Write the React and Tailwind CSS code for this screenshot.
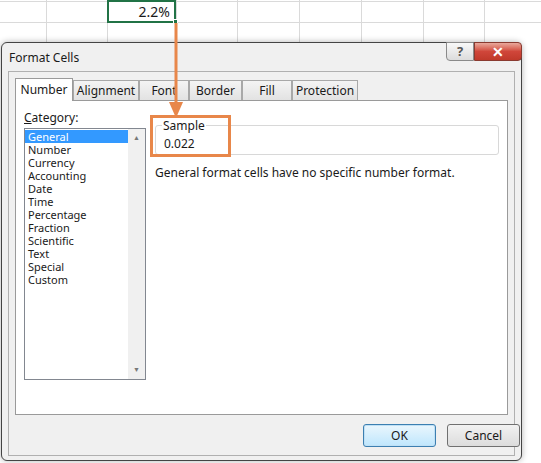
const cats = ["General","Number","Currency","Accounting","Date","Time","Percentage","Fraction","Scientific","Text","Special","Custom"];
const tabs = [["Number",58],["Alignment",66],["Font",50],["Border",53],["Fill",50],["Protection",66]];

export default function App() {
  const cols = [46,107,176,237,299,361,423,484];
  return (
    <div className="relative w-[541px] h-[463px] bg-white overflow-hidden text-[12px] text-[#1a1a1a]" style={{fontFamily:'"Segoe UI","Noto Sans","Liberation Sans",sans-serif'}}>
      {/* spreadsheet grid */}
      <div className="absolute inset-x-0 top-0 h-[44px]">
        <div className="absolute left-0 right-0 top-[1px] h-px bg-[#dadada]" />
        <div className="absolute left-0 right-0 top-[22px] h-px bg-[#dadada]" />
        {cols.map(x => <div key={x} className="absolute top-0 bottom-0 w-px bg-[#dadada]" style={{left:x}} />)}
        <div className="absolute left-[107px] top-0 w-[69px] h-[23px] border-2 border-[#217346] bg-white text-right pr-1 text-[14px] leading-[20px]">2.2%</div>
        <div className="absolute left-[173px] top-[19px] w-[5px] h-[5px] bg-[#217346] border border-white" />
      </div>

      {/* dialog */}
      <div className="absolute left-px top-[42px] w-[521px] h-[419px] border border-[#444] rounded-[6px] bg-[#f0f0f0] shadow-[0_0_6px_rgba(0,0,0,0.3)]">
        <div className="flex items-start justify-between h-[28px]">
          <div className="pl-[7px] pt-[6px] text-[12px]">Format Cells</div>
          <div className="flex mr-[-1px] mt-[-1px]">
            <div className="w-[28px] h-[19px] border border-[#8a8a8a] rounded-bl-[4px] bg-gradient-to-b from-[#f8f8f8] to-[#dcdcdc] flex items-center justify-center text-[13px] text-[#555] font-bold">?</div>
            <div className="w-[48px] h-[19px] border border-[#8a3a30] rounded-br-[4px] rounded-tr-[4px] bg-gradient-to-b from-[#e8a89c] via-[#d0463a] to-[#c0392b] flex items-center justify-center text-white text-[14px] font-bold">✕</div>
          </div>
        </div>
        <div className="mx-[6px] h-[385px] border border-[#b0b0b0] bg-[#f0f0f0] flex flex-col px-[6px]">
          <div className="flex mt-[6px] h-[22px] items-end">
            {tabs.map(([t,w],i) => (
              <div key={t} style={{width:w}} className={i===0 ? "h-[23px] border border-b-0 border-[#9a9a9a] bg-white flex items-center justify-center relative top-px z-10" : "h-[20px] border border-b-0 border-[#a8a8a8] bg-gradient-to-b from-[#f4f4f4] to-[#e2e2e2] flex items-center justify-center"}>{t}</div>
            ))}
          </div>
          <div className="h-[315px] border border-[#9a9a9a] bg-white flex px-[8px] pt-[8px] gap-[9px]">
            <div className="flex flex-col">
              <div className="mb-[1px]"><span className="underline">C</span>ategory:</div>
              <div className="w-[122px] h-[252px] border border-[#828790] flex">
                <div className="flex-1 pt-px text-[11px]">
                  {cats.map((c,i) => <div key={c} className={"h-[13px] leading-[13px] px-[3px] " + (i===0 ? "bg-[#3399ff] text-white" : "")}>{c}</div>)}
                </div>
                <div className="w-[17px] bg-[#f0f0f0] flex flex-col justify-between items-center py-1 text-[7px] text-[#777]">
                  <span>▲</span><span>▼</span>
                </div>
              </div>
            </div>
            <div className="flex-1 pt-[14px]">
              <div className="relative">
                <div className="absolute left-[-5px] top-[-10px] w-[81px] h-[42px] border-[3px] border-[#e8874a] z-10" />
                <div className="h-[30px] mt-[2px] border border-[#d8d8d8] rounded-[3px] relative">
                  <div className="absolute left-[6px] top-[-9px] bg-white px-px">Sample</div>
                  <div className="pl-[8px] pt-[11px] leading-[14px]">0.022</div>
                </div>
              </div>
              <div className="mt-[9px]">General format cells have no specific number format.</div>
            </div>
          </div>
          <div className="flex justify-end gap-[11px] mt-[9px] mr-[-12px]">
            <div className="w-[73px] h-[23px] border border-[#3c7fb1] rounded-[3px] bg-gradient-to-b from-[#eaf6fd] to-[#bee6fd] flex items-center justify-center shadow-[inset_0_0_0_1px_#bfe0f5]">OK</div>
            <div className="w-[73px] h-[23px] border border-[#707070] rounded-[3px] bg-gradient-to-b from-[#f2f2f2] to-[#dcdcdc] flex items-center justify-center">Cancel</div>
          </div>
        </div>
      </div>

      {/* arrow */}
      <svg className="absolute left-0 top-0 z-20 pointer-events-none" width="541" height="463">
        <line x1="176" y1="23" x2="176" y2="104" stroke="#e8874a" strokeWidth="3" />
        <polygon points="169,102 183,102 176,118" fill="#e8874a" />
      </svg>
    </div>
  );
}
